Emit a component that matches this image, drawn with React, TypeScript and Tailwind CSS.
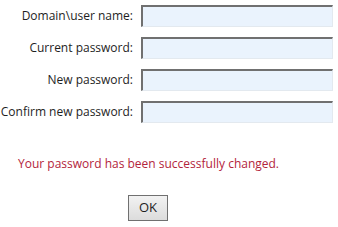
export default function App() {
  const fields = ["Domain\\user name:", "Current password:", "New password:", "Confirm new password:"];
  return (
    <div className="w-[338px] h-[227px] bg-white overflow-hidden" style={{ fontFamily: '"Open Sans", "Noto Sans", sans-serif' }}>
      <div className="flex flex-col gap-[10px] pt-[5px]">
        {fields.map((f) => (
          <div key={f} className="flex items-center h-[22px]">
            <label className="w-[136px] text-right pr-[3px] text-[12px] text-[#1e1e1e] whitespace-nowrap">{f}</label>
            <div className="ml-[5px] w-[192px] h-[22px] bg-[#eaf3fd] border-t-2 border-l-2 border-t-[#707070] border-l-[#707070] border-r border-b border-r-[#e3e9ef] border-b-[#e3e9ef]" />
          </div>
        ))}
      </div>
      <div className="pl-[18px] mt-[32px] text-[12px] text-[#b3243c]">Your password has been successfully changed.</div>
      <div className="flex pl-[128px] mt-[22px]">
        <button className="w-[40px] h-[26px] border border-[#707070] bg-gradient-to-b from-[#f2f2f2] to-[#dcdcdc] text-[13px] text-[#1e1e1e]">OK</button>
      </div>
    </div>
  );
}
